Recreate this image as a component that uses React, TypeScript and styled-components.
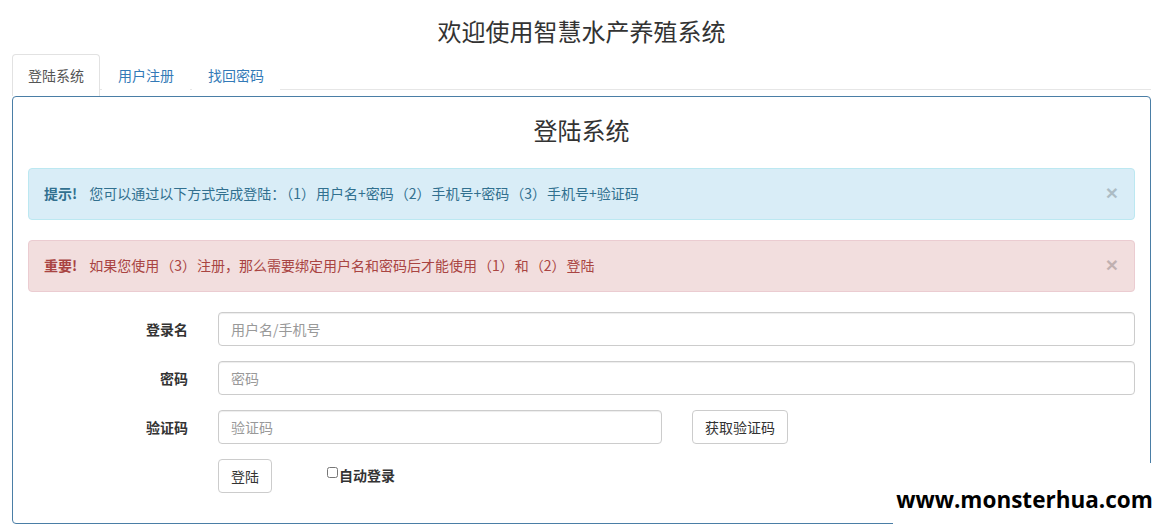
import React from "react";
import styled, { createGlobalStyle } from "styled-components";

const GlobalStyle = createGlobalStyle`
  * { box-sizing: border-box; }
  html, body { margin: 0; padding: 0; background: #fff; }
  body {
    font-family: "Noto Sans CJK SC", "Noto Sans", "Liberation Sans", sans-serif;
    font-size: 14px;
    line-height: 1.42857;
    color: #333;
  }
`;

const Page = styled.div`
  position: relative;
  width: 1154px;
  height: 532px;
  padding: 0 3px 0 12px;
  overflow: hidden;
`;

const Heading = styled.h2`
  margin: 0 0 6px;
  padding-top: 14px;
  font-size: 24px;
  line-height: 34px;
  font-weight: 400;
  text-align: center;
  color: #333;
`;

const TabBar = styled.ul`
  display: flex;
  align-items: flex-start;
  list-style: none;
  margin: 0;
  padding: 0;
  height: 36px;
  border-bottom: 1px solid #e6e6e6;
`;

const Tab = styled.li<{ $active?: boolean }>`
  margin-right: 2px;
  padding: 10px 15px;
  line-height: 20px;
  font-size: 14px;
  border: 1px solid ${(p) => (p.$active ? "#e2e2e2" : "transparent")};
  border-bottom: none;
  border-radius: 4px 4px 0 0;
  background: #fff;
  color: ${(p) => (p.$active ? "#555" : "#337ab7")};
  height: ${(p) => (p.$active ? "42px" : "36px")};
  position: relative;
  z-index: 1;
`;

const Panel = styled.div`
  margin-top: 6px;
  border: 1px solid #4a7ea6;
  border-radius: 4px;
  padding: 15px;
`;

const PanelTitle = styled.h3`
  margin: 0 0 20px;
  font-size: 24px;
  line-height: 36px;
  font-weight: 400;
  text-align: center;
  color: #333;
`;

const Alert = styled.div<{ $kind: "info" | "danger" }>`
  display: flex;
  align-items: center;
  margin-bottom: 20px;
  padding: 14px 15px 16px 15px;
  border: 1px solid ${(p) => (p.$kind === "info" ? "#bce8f1" : "#ebccd1")};
  border-radius: 4px;
  background: ${(p) => (p.$kind === "info" ? "#d9edf7" : "#f2dede")};
  color: ${(p) => (p.$kind === "info" ? "#31708f" : "#a94442")};
  line-height: 20px;
  font-size: 14px;
`;

const AlertText = styled.div`
  flex: 1;
`;

const Strong = styled.strong`
  font-weight: 700;
  margin-right: 12px;
`;

const Paren = styled.span`
  margin: 0 1px;
`;

const Close = styled.span`
  font-size: 21px;
  font-weight: 700;
  line-height: 20px;
  color: #000;
  opacity: 0.2;
  margin-right: 1px;
  font-family: "Liberation Sans", Arial, sans-serif;
`;

const FormRow = styled.div`
  display: grid;
  grid-template-columns: 160px 1fr;
  column-gap: 30px;
  margin-bottom: 15px;
  align-items: start;
`;

const Label = styled.label`
  padding-top: 7px;
  line-height: 20px;
  font-weight: 700;
  text-align: right;
  color: #333;
`;

const Input = styled.input`
  display: block;
  width: 100%;
  height: 34px;
  padding: 6px 12px;
  font-family: inherit;
  font-size: 14px;
  line-height: 20px;
  color: #555;
  background: #fff;
  border: 1px solid #ccc;
  border-radius: 4px;
  box-shadow: inset 0 1px 1px rgba(0, 0, 0, 0.075);
  outline: none;
  &::placeholder { color: #999; }
`;

const SplitField = styled.div`
  display: grid;
  grid-template-columns: 444px auto;
  column-gap: 30px;
  justify-items: start;
`;

const Button = styled.button`
  height: 34px;
  padding: 6px 12px;
  font-family: inherit;
  font-size: 14px;
  line-height: 20px;
  color: #333;
  background: #fff;
  border: 1px solid #ccc;
  border-radius: 4px;
`;

const ActionRow = styled.div`
  display: flex;
  align-items: center;
`;

const CheckLabel = styled.label`
  display: flex;
  align-items: center;
  margin-left: 55px;
  font-weight: 700;
  line-height: 20px;
  margin-top: -3px;
`;

const Check = styled.input`
  width: 11px;
  height: 11px;
  margin: 0 1px 4px 0;
`;

const Watermark = styled.div`
  position: absolute;
  right: 0;
  bottom: 0;
  width: 261px;
  height: 69px;
  background: #fff;
  display: flex;
  align-items: center;
  justify-content: center;
  padding-top: 6px;
  padding-left: 2px;
  font-family: "Open Sans", "Liberation Sans", sans-serif;
  font-weight: 700;
  font-size: 22.5px;
  color: #000;
`;

export default function App() {
  return (
    <>
      <GlobalStyle />
      <Page>
        <Heading>欢迎使用智慧水产养殖系统</Heading>
        <TabBar>
          <Tab $active>登陆系统</Tab>
          <Tab>用户注册</Tab>
          <Tab>找回密码</Tab>
        </TabBar>
        <Panel>
          <PanelTitle>登陆系统</PanelTitle>
          <Alert $kind="info">
            <AlertText>
              <Strong>提示!</Strong>您可以通过以下方式完成登陆：<Paren>（1）</Paren>用户名+密码<Paren>（2）</Paren>手机号+密码<Paren>（3）</Paren>手机号+验证码
            </AlertText>
            <Close>×</Close>
          </Alert>
          <Alert $kind="danger">
            <AlertText>
              <Strong>重要!</Strong>如果您使用<Paren>（3）</Paren>注册，那么需要绑定用户名和密码后才能使用<Paren>（1）</Paren>和<Paren>（2）</Paren>登陆
            </AlertText>
            <Close>×</Close>
          </Alert>
          <FormRow>
            <Label>登录名</Label>
            <Input placeholder="用户名/手机号" />
          </FormRow>
          <FormRow>
            <Label>密码</Label>
            <Input type="password" placeholder="密码" />
          </FormRow>
          <FormRow>
            <Label>验证码</Label>
            <SplitField>
              <Input placeholder="验证码" />
              <Button>获取验证码</Button>
            </SplitField>
          </FormRow>
          <FormRow>
            <span />
            <ActionRow>
              <Button>登陆</Button>
              <CheckLabel>
                <Check type="checkbox" />
                自动登录
              </CheckLabel>
            </ActionRow>
          </FormRow>
        </Panel>
        <Watermark>www.monsterhua.com</Watermark>
      </Page>
    </>
  );
}
